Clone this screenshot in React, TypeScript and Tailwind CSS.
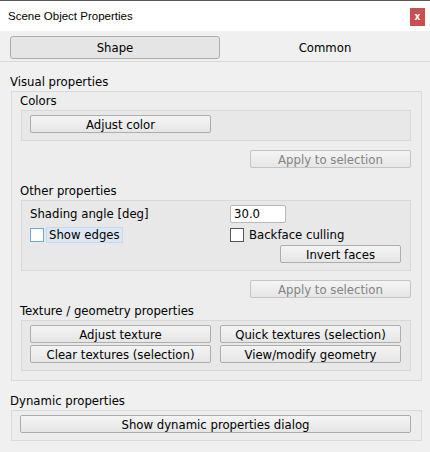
import React from 'react'

const font = { fontFamily: 'Tahoma, "DejaVu Sans Condensed", "Liberation Sans", sans-serif' }
const titleFont = { fontFamily: '"Segoe UI", "Liberation Sans", sans-serif' }

function Btn({ label, w, disabled }: { label: string; w: string; disabled?: boolean }) {
  return (
    <div
      className={`${w} h-[18px] flex items-center justify-center rounded-[2px] border bg-gradient-to-b from-[#f4f4f4] to-[#e6e6e6] text-[13px] leading-none ${
        disabled ? 'border-[#c4c4c4] text-[#838383]' : 'border-[#adadad] text-black'
      }`}
    >
      {label}
    </div>
  )
}

function Label({ children, className }: { children: React.ReactNode; className?: string }) {
  return <div className={`flex items-end pb-[1px] text-[13px] leading-[16px] text-black ${className ?? ''}`}>{children}</div>
}

function Check() {
  return <div className="w-[14px] h-[14px] border border-[#555] bg-white shrink-0" />
}

export default function App() {
  return (
    <div className="w-[430px] h-[452px] bg-[#f0f0f0] flex flex-col overflow-hidden" style={font}>
      {/* title bar */}
      <div className="h-[31px] bg-white border-t border-[#5a5a5a] flex items-start justify-between">
        <span className="ml-[8px] mt-[7px] text-[11.5px] leading-[16px] text-black" style={titleFont}>
          Scene Object Properties
        </span>
        <div className="mt-[7px] mr-[5px] w-[15px] h-[18px] bg-[#c75050] flex items-center justify-center text-white text-[10px] font-bold leading-none">
          x
        </div>
      </div>

      {/* tabs */}
      <div className="h-[31px] border-b border-[#d9d9d9] flex items-start pt-[5px] pl-[10px]">
        <div className="w-[210px] h-[23px] rounded-[3px] border border-[#acacac] bg-[#e5e5e5] flex items-center justify-center text-[13px]">
          Shape
        </div>
        <div className="w-[210px] h-[23px] flex items-center justify-center text-[13px]">Common</div>
      </div>

      <Label className="h-[29px] pl-[10px]">Visual properties</Label>

      {/* visual properties box */}
      <div className="ml-[11px] w-[411px] h-[290px] border border-[#dadada] bg-[#ededed] flex flex-col">
        <Label className="h-[18px] pl-[8px]">Colors</Label>
        <div className="ml-[9px] w-[390px] h-[31px] border border-[#d8d8d8] bg-[#e8e8e8] pl-[8px] pt-[4px]">
          <Btn label="Adjust color" w="w-[181px]" />
        </div>
        <div className="ml-[9px] w-[390px] mt-[9px] flex justify-end">
          <Btn label="Apply to selection" w="w-[161px]" disabled />
        </div>

        <Label className="h-[32px] pl-[8px]">Other properties</Label>
        <div className="ml-[9px] w-[390px] h-[71px] border border-[#d8d8d8] bg-[#e8e8e8] pl-[8px] pt-[4px] flex flex-col">
          <div className="flex items-center h-[18px]">
            <span className="w-[200px] text-[13px]">Shading angle [deg]</span>
            <div className="w-[56px] h-[18px] bg-white border border-[#b8b8b8] rounded-[2px] text-[13px] leading-[16px] pl-[3px]">
              30.0
            </div>
          </div>
          <div className="flex items-center h-[16px] mt-[4px]">
            <div className="w-[200px] flex items-center">
              <div className="w-[14px] h-[14px] border border-[#6fa8dc] bg-white shrink-0" />
              <span className="ml-[2px] h-[16px] px-[2px] bg-[#dbe8f4] border border-[#c5d9ec] text-[13px] leading-[14px]">
                Show edges
              </span>
            </div>
            <Check />
            <span className="ml-[5px] text-[13px] leading-[16px]">Backface culling</span>
          </div>
          <div className="flex mt-[2px] pl-[250px]">
            <Btn label="Invert faces" w="w-[121px]" />
          </div>
        </div>
        <div className="ml-[9px] w-[390px] mt-[9px] flex justify-end">
          <Btn label="Apply to selection" w="w-[161px]" disabled />
        </div>

        <Label className="h-[22px] pl-[8px]">Texture / geometry properties</Label>
        <div className="ml-[9px] w-[390px] h-[51px] border border-[#d8d8d8] bg-[#e8e8e8] pl-[8px] pt-[4px] grid grid-cols-[181px_181px] gap-x-[9px] gap-y-[2px] content-start">
          <Btn label="Adjust texture" w="w-[181px]" />
          <Btn label="Quick textures (selection)" w="w-[181px]" />
          <Btn label="Clear textures (selection)" w="w-[181px]" />
          <Btn label="View/modify geometry" w="w-[181px]" />
        </div>
      </div>

      <Label className="h-[29px] pl-[10px]">Dynamic properties</Label>
      <div className="ml-[11px] w-[411px] h-[31px] border border-[#dadada] bg-[#ededed] pl-[8px] pt-[4px]">
        <Btn label="Show dynamic properties dialog" w="w-[391px]" />
      </div>
    </div>
  )
}
